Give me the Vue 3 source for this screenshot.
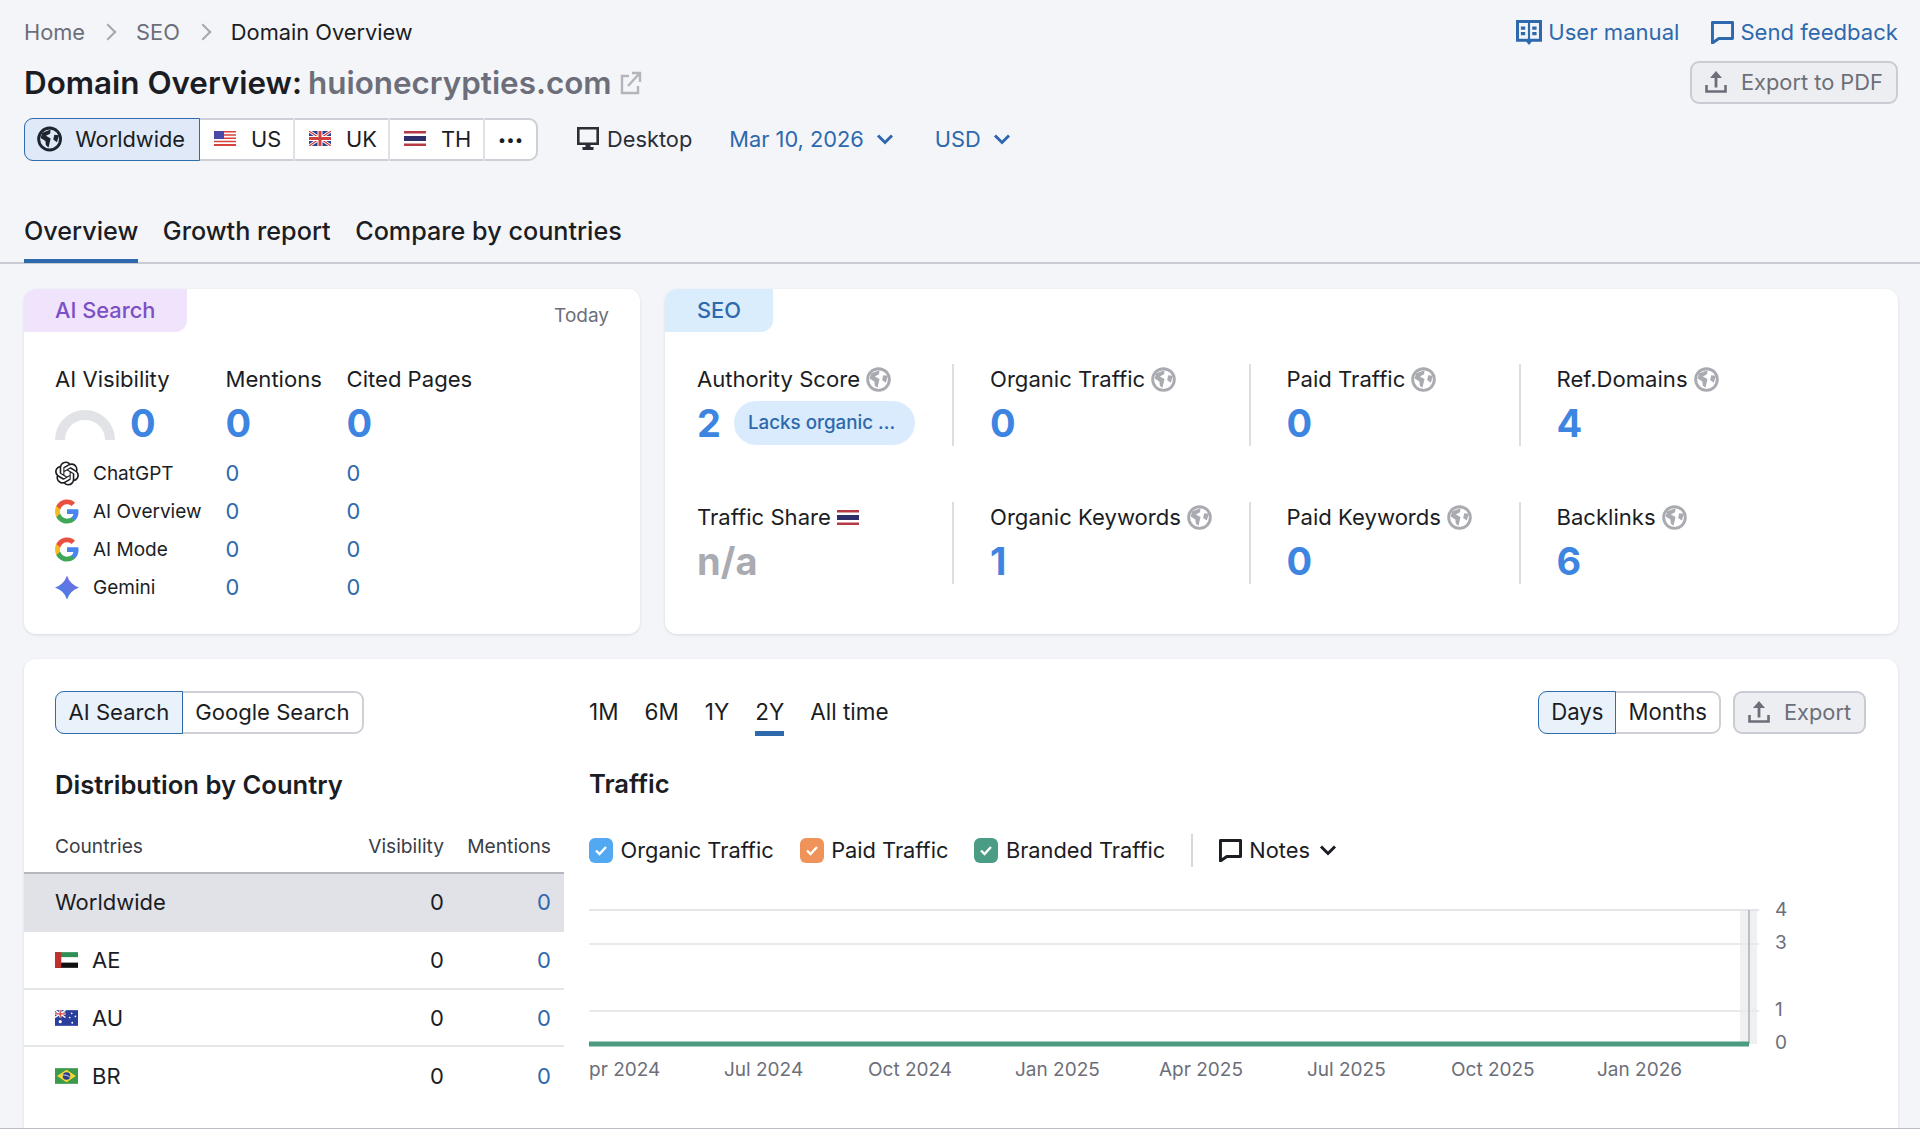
<script setup>
const regions = [
  { code: "US", flag: "flag-us" },
  { code: "UK", flag: "flag-uk" },
  { code: "TH", flag: "flag-th" },
];

const tabs = ["Overview", "Growth report", "Compare by countries"];

const aiRows = [
  { name: "ChatGPT", icon: "chatgpt" },
  { name: "AI Overview", icon: "google" },
  { name: "AI Mode", icon: "google" },
  { name: "Gemini", icon: "gemini" },
];

const seoMetrics = [
  { label: "Authority Score", value: "2", pill: "Lacks organic ..." },
  { label: "Organic Traffic", value: "0" },
  { label: "Paid Traffic", value: "0" },
  { label: "Ref.Domains", value: "4" },
  { label: "Traffic Share", value: "n/a", muted: true, flag: "flag-th" },
  { label: "Organic Keywords", value: "1" },
  { label: "Paid Keywords", value: "0" },
  { label: "Backlinks", value: "6" },
];

const countries = [
  { name: "Worldwide", active: true },
  { name: "AE", flag: "flag-ae" },
  { name: "AU", flag: "flag-au" },
  { name: "BR", flag: "flag-br" },
];

const ranges = ["1M", "6M", "1Y", "2Y", "All time"];

const legend = [
  { label: "Organic Traffic", color: "#52a9f2" },
  { label: "Paid Traffic", color: "#f0935a" },
  { label: "Branded Traffic", color: "#4a9d84" },
];

// chart coordinates are relative to the svg box
const gridLines = [15, 49, 116];
const yTicks = [
  { label: "4", y: 14 },
  { label: "3", y: 47 },
  { label: "1", y: 114 },
  { label: "0", y: 147 },
];
const xTicks = [
  { label: "pr 2024", x: 0 },
  { label: "Jul 2024", x: 135 },
  { label: "Oct 2024", x: 279 },
  { label: "Jan 2025", x: 426 },
  { label: "Apr 2025", x: 570 },
  { label: "Jul 2025", x: 718 },
  { label: "Oct 2025", x: 862 },
  { label: "Jan 2026", x: 1008 },
];
</script>

<template>
  <div class="page">
    <svg class="defs" aria-hidden="true">
      <symbol id="globe" viewBox="0 0 24 24">
        <circle cx="12" cy="12" r="10.400" fill="none" stroke="currentColor" stroke-width="2.800" />
        <path fill="currentColor" d="M5 6l8-3-.5 4-4 2 4.500 2.500L11 20l-2.500-2-.5-4-4.500-3z" />
        <path fill="currentColor" d="M16.500 8l4.500.5-2 6.500-3.500-2.500z" />
      </symbol>
      <symbol id="flag-us" viewBox="0 0 22 15">
        <rect width="22" height="15" fill="#fff" />
        <path fill="#d8423e" d="M0 0h22v1.600H0zM0 3.200h22v1.600H0zM0 6.500h22v1.600H0zM0 9.700h22v1.600H0zM0 13h22v2H0z" />
        <rect width="10" height="8" fill="#4a49a8" />
      </symbol>
      <symbol id="flag-uk" viewBox="0 0 22 15">
        <rect width="22" height="15" fill="#2d3f8f" />
        <path stroke="#fff" stroke-width="3" d="M0 0l22 15M22 0L0 15" />
        <path stroke="#d0403f" stroke-width="1.200" d="M0 0l22 15M22 0L0 15" />
        <path stroke="#fff" stroke-width="5" d="M11 0v15M0 7.500h22" />
        <path stroke="#d0403f" stroke-width="3" d="M11 0v15M0 7.500h22" />
      </symbol>
      <symbol id="flag-th" viewBox="0 0 22 15">
        <rect width="22" height="15" fill="#b53a44" />
        <rect y="2.500" width="22" height="10" fill="#fff" />
        <rect y="5" width="22" height="5" fill="#2d2f6b" />
      </symbol>
      <symbol id="flag-ae" viewBox="0 0 22 15">
        <rect width="22" height="5" fill="#2f8f55" />
        <rect y="5" width="22" height="5" fill="#fff" />
        <rect y="10" width="22" height="5" fill="#111" />
        <rect width="6" height="15" fill="#c0302c" />
      </symbol>
      <symbol id="flag-au" viewBox="0 0 22 15">
        <rect width="22" height="15" fill="#2a3f9d" />
        <path stroke="#fff" stroke-width="1.400" d="M0 0l10 7M10 0L0 7" />
        <path stroke="#fff" stroke-width="2.400" d="M5 0v7M0 3.500h10" />
        <path stroke="#d0403f" stroke-width="1.200" d="M5 0v7M0 3.500h10" />
        <g fill="#fff">
          <circle cx="5" cy="11" r="1.500" />
          <circle cx="16" cy="3" r=".8" />
          <circle cx="19.500" cy="6" r=".8" />
          <circle cx="14" cy="7" r=".8" />
          <circle cx="16.500" cy="12" r=".9" />
        </g>
      </symbol>
      <symbol id="flag-br" viewBox="0 0 22 15">
        <rect width="22" height="15" fill="#3d9a4a" />
        <path fill="#f4d83a" d="M11 1.500L20 7.500 11 13.500 2 7.500z" />
        <circle cx="11" cy="7.500" r="3.600" fill="#2b3a8a" />
        <path stroke="#fff" stroke-width=".8" fill="none" d="M7.600 6.600c2.500-.3 5 .5 6.700 2.200" />
      </symbol>
      <symbol id="upload" viewBox="0 0 24 24">
        <path fill="none" stroke="currentColor" stroke-width="2.600" d="M2.500 15v6.500h19V15" />
        <path fill="currentColor" d="M12 1l6 7h-4.600v9.500h-2.800V8H6z" />
      </symbol>
      <symbol id="bubble" viewBox="1 1 22 22">
        <path fill="none" stroke="currentColor" stroke-width="2.800" stroke-linejoin="round" d="M2.400 2.400h19.200v15.300H8.500l-6.100 4.300z" />
      </symbol>
      <symbol id="chev" viewBox="0 0 18 18">
        <path fill="none" stroke="currentColor" stroke-width="3" d="M2 5.500l7 7 7-7" />
      </symbol>
    </svg>

    <div class="head-top">
      <div class="crumbs">
        <span class="crumb">Home</span>
        <span class="crumb-sep"></span>
        <span class="crumb">SEO</span>
        <span class="crumb-sep"></span>
        <span class="crumb-now">Domain Overview</span>
      </div>
      <div class="links">
        <a class="link">
          <svg class="book" viewBox="1 2 24 23">
            <path fill="currentColor" d="M1 2h24v20h-9.500L13 25l-2.500-3H1zM3.800 4.800v14.500H12V4.800zM14 4.800v14.500h8.200V4.800z" />
            <path fill="currentColor" d="M5.500 8h4v3h-4zM5.500 13h4v3h-4zM16 8h4v3h-4zM16 13h4v3h-4z" />
          </svg>
          User manual
        </a>
        <a class="link">
          <svg class="bubble"><use href="#bubble" /></svg>
          Send feedback
        </a>
      </div>
    </div>

    <div class="title-row">
      <h1 class="title">
        <span>Domain Overview:</span>
        <span class="domain">huionecrypties.com</span>
        <svg class="ext" viewBox="0 0 22 24">
          <path fill="none" stroke="currentColor" stroke-width="2.400" d="M9 5H2v17h16v-7" />
          <path fill="none" stroke="currentColor" stroke-width="2.400" d="M8 15L19 3M12 2h8v9" />
        </svg>
      </h1>
      <button class="btn-export pdf">
        <svg class="up"><use href="#upload" /></svg>
        Export to PDF
      </button>
    </div>

    <div class="toolbar">
      <div class="seg">
        <div class="seg-item active world">
          <svg class="globe-dark"><use href="#globe" /></svg>
          Worldwide
        </div>
        <div v-for="r in regions" :key="r.code" class="seg-item region">
          <svg class="flag"><use :href="'#' + r.flag" /></svg>
          {{ r.code }}
        </div>
        <div class="seg-item dots">•••</div>
      </div>
      <div class="device">
        <svg class="monitor" viewBox="0 0 22 24">
          <path fill="none" stroke="currentColor" stroke-width="2.600" d="M1.300 1.300h19.400v15.400H1.300z" />
          <path fill="currentColor" d="M8.500 17h5v3h3v3h-11v-3h3z" />
        </svg>
        Desktop
      </div>
      <div class="picker date">
        Mar 10, 2026
        <svg class="chev"><use href="#chev" /></svg>
      </div>
      <div class="picker usd">
        USD
        <svg class="chev"><use href="#chev" /></svg>
      </div>
    </div>

    <div class="tabs">
      <div v-for="(t, i) in tabs" :key="t" class="tab" :class="{ on: i === 0 }">{{ t }}</div>
    </div>

    <div class="cards">
      <section class="card ai-card">
        <div class="card-head">
          <div class="tag tag-ai">AI Search</div>
          <div class="today">Today</div>
        </div>
        <div class="ai-grid">
          <div class="lbl">AI Visibility</div>
          <div class="lbl">Mentions</div>
          <div class="lbl">Cited Pages</div>
          <div class="big-cell">
            <svg class="gauge" viewBox="0 0 60 30">
              <path fill="none" stroke="#e2e3e7" stroke-width="10" d="M5 30a25 25 0 0 1 50 0" />
            </svg>
            <span class="big">0</span>
          </div>
          <div class="big-cell"><span class="big">0</span></div>
          <div class="big-cell"><span class="big">0</span></div>

          <template v-for="row in aiRows" :key="row.name">
            <div class="ai-name">
              <svg v-if="row.icon === 'chatgpt'" class="ai-icon" viewBox="0 0 24 24">
                <path fill="#1c1d22" d="M22.2819 9.8211a5.9847 5.9847 0 0 0-.5157-4.9108 6.0462 6.0462 0 0 0-6.5098-2.9A6.0651 6.0651 0 0 0 4.9807 4.1818a5.9847 5.9847 0 0 0-3.9977 2.9 6.0462 6.0462 0 0 0 .7427 7.0966 5.98 5.98 0 0 0 .511 4.9107 6.051 6.051 0 0 0 6.5146 2.9001A5.9847 5.9847 0 0 0 13.2599 24a6.0557 6.0557 0 0 0 5.7718-4.2058 5.9894 5.9894 0 0 0 3.9977-2.9001 6.0557 6.0557 0 0 0-.7475-7.0729zm-9.022 12.6081a4.4755 4.4755 0 0 1-2.8764-1.0408l.1419-.0804 4.7783-2.7582a.7948.7948 0 0 0 .3927-.6813v-6.7369l2.02 1.1686a.071.071 0 0 1 .038.052v5.5826a4.504 4.504 0 0 1-4.4945 4.4944zm-9.6607-4.1254a4.4708 4.4708 0 0 1-.5346-3.0137l.142.0852 4.783 2.7582a.7712.7712 0 0 0 .7806 0l5.8428-3.3685v2.3324a.0804.0804 0 0 1-.0332.0615L9.74 19.9502a4.4992 4.4992 0 0 1-6.1408-1.6464zM2.3408 7.8956a4.485 4.485 0 0 1 2.3655-1.9728V11.6a.7664.7664 0 0 0 .3879.6765l5.8144 3.3543-2.0201 1.1685a.0757.0757 0 0 1-.071 0l-4.8303-2.7865A4.504 4.504 0 0 1 2.3408 7.872zm16.5963 3.8558L13.1038 8.364 15.1192 7.2a.0757.0757 0 0 1 .071 0l4.8303 2.7913a4.4944 4.4944 0 0 1-.6765 8.1042v-5.6772a.79.79 0 0 0-.407-.667zm2.0107-3.0231l-.142-.0852-4.7735-2.7818a.7759.7759 0 0 0-.7854 0L9.409 9.2297V6.8974a.0662.0662 0 0 1 .0284-.0615l4.8303-2.7866a4.4992 4.4992 0 0 1 6.6802 4.66zM8.3065 12.863l-2.02-1.1638a.0804.0804 0 0 1-.038-.0567V6.0742a4.4992 4.4992 0 0 1 7.3757-3.4537l-.142.0805L8.704 5.459a.7948.7948 0 0 0-.3927.6813zm1.0976-2.3654l2.602-1.4998 2.6069 1.4998v2.9994l-2.5974 1.4997-2.6067-1.4997Z" />
              </svg>
              <svg v-else-if="row.icon === 'google'" class="ai-icon" viewBox="1 1 22 22">
                <path fill="#4a84ee" d="M22.560 12.250c0-.78-.07-1.530-.2-2.250H12v4.260h5.920c-.26 1.370-1.040 2.530-2.210 3.310v2.770h3.570c2.080-1.920 3.280-4.740 3.280-8.090z" />
                <path fill="#3fa757" d="M12 23c2.970 0 5.460-.98 7.280-2.660l-3.570-2.770c-.98.66-2.230 1.060-3.710 1.060-2.860 0-5.290-1.930-6.160-4.530H2.180v2.840C3.990 20.530 7.700 23 12 23z" />
                <path fill="#f5bb1c" d="M5.840 14.090c-.22-.66-.35-1.360-.35-2.090s.13-1.430.35-2.090V7.070H2.180C1.430 8.550 1 10.220 1 12s.43 3.450 1.180 4.930l2.850-2.220.81-.62z" />
                <path fill="#e8503f" d="M12 5.380c1.620 0 3.060.56 4.210 1.640l3.150-3.150C17.450 2.090 14.970 1 12 1 7.700 1 3.990 3.470 2.180 7.070l3.660 2.840c.87-2.600 3.300-4.530 6.160-4.530z" />
              </svg>
              <svg v-else class="ai-icon" viewBox="0 0 24 24">
                <defs>
                  <linearGradient id="gem" x1="0" y1="1" x2="1" y2="0">
                    <stop offset="0" stop-color="#3f84e8" />
                    <stop offset="1" stop-color="#7a6be0" />
                  </linearGradient>
                </defs>
                <path fill="url(#gem)" d="M12 0Q15 9 24 12 15 15 12 24 9 15 0 12 9 9 12 0z" />
              </svg>
              <span>{{ row.name }}</span>
            </div>
            <div class="small-val">0</div>
            <div class="small-val">0</div>
          </template>
        </div>
      </section>

      <section class="card seo-card">
        <div class="card-head">
          <div class="tag tag-seo">SEO</div>
        </div>
        <div class="seo-grid">
          <div v-for="m in seoMetrics" :key="m.label" class="metric">
            <div class="lbl lbl-row">
              {{ m.label }}
              <svg v-if="m.flag" class="flag-sm"><use :href="'#' + m.flag" /></svg>
              <svg v-else class="globe"><use href="#globe" /></svg>
            </div>
            <div class="big-cell">
              <span class="big" :class="{ muted: m.muted }">{{ m.value }}</span>
              <span v-if="m.pill" class="pill">{{ m.pill }}</span>
            </div>
          </div>
        </div>
      </section>
    </div>

    <section class="card bottom">
      <div class="left-col">
        <div class="seg seg-left">
          <div class="seg-item active">AI Search</div>
          <div class="seg-item">Google Search</div>
        </div>
        <h2 class="sub">Distribution by Country</h2>
        <div class="t-head t-row">
          <span>Countries</span>
          <span class="num">Visibility</span>
          <span class="num">Mentions</span>
        </div>
        <div v-for="c in countries" :key="c.name" class="t-body t-row" :class="{ current: c.active }">
          <span class="t-name">
            <svg v-if="c.flag" class="flag-row"><use :href="'#' + c.flag" /></svg>
            {{ c.name }}
          </span>
          <span class="num">0</span>
          <span class="num blue">0</span>
        </div>
      </div>

      <div class="right-col">
        <div class="ctrl-row">
          <div class="ranges">
            <div v-for="r in ranges" :key="r" class="range" :class="{ on: r === '2Y' }">{{ r }}</div>
          </div>
          <div class="ctrl-right">
            <div class="seg seg-days">
              <div class="seg-item active">Days</div>
              <div class="seg-item">Months</div>
            </div>
            <button class="btn-export exp">
              <svg class="up"><use href="#upload" /></svg>
              Export
            </button>
          </div>
        </div>

        <h2 class="sub traffic">Traffic</h2>

        <div class="legend">
          <div v-for="l in legend" :key="l.label" class="leg-item">
            <span class="check" :style="{ background: l.color }">
              <svg viewBox="0 0 16 16"><path fill="none" stroke="#fff" stroke-width="2.400" d="M3 8.500l3.500 3.500L13 5" /></svg>
            </span>
            {{ l.label }}
          </div>
          <span class="leg-div"></span>
          <div class="notes">
            <svg class="bubble"><use href="#bubble" /></svg>
            Notes
            <svg class="chev"><use href="#chev" /></svg>
          </div>
        </div>

        <svg class="chart" viewBox="0 0 1277 190">
          <rect x="1151" y="15" width="17" height="134" fill="#eef0f2" />
          <line x1="0" x2="1170" y1="15" y2="15" stroke="#e4e5e8" stroke-width="2" />
          <line v-for="y in gridLines.slice(1)" :key="y" x1="0" x2="1170" :y1="y" :y2="y" stroke="#e9eaec" stroke-width="2" />
          <line x1="1160" x2="1160" y1="15" y2="149" stroke="#bcc0c4" stroke-width="2" />
          <line x1="0" x2="1160" y1="149" y2="149" stroke="#4c9a80" stroke-width="5" />
          <text v-for="t in yTicks" :key="t.label" x="1186" :y="t.y + 7" class="tick">{{ t.label }}</text>
          <text v-for="t in xTicks" :key="t.label" :x="t.x" y="181" class="tick">{{ t.label }}</text>
        </svg>
      </div>
    </section>
  </div>
</template>

<style>
html,
body {
  margin: 0;
  background: #f4f5f9;
}
</style>

<style scoped>
.page {
  width: 1920px;
  height: 1129px;
  box-sizing: border-box;
  padding: 8px 22px 0 24px;
  background: #f4f5f9;
  border-bottom: 1px solid #b9bcc3;
  overflow: hidden;
  font-family: Inter, "Liberation Sans", sans-serif;
  font-size: 21.8px;
  color: #1b1d24;
}

.defs {
  position: absolute;
  width: 0;
  height: 0;
}

.head-top {
  display: flex;
  justify-content: space-between;
  align-items: center;
  height: 48px;
}

.crumbs {
  display: flex;
  align-items: center;
}

.crumb {
  color: #6c6e79;
}

.crumb-sep {
  width: 10px;
  height: 10px;
  margin: 0 22px 0 17px;
  border-top: 2px solid #a4a7af;
  border-right: 2px solid #a4a7af;
  transform: rotate(45deg);
}

.links {
  display: flex;
  gap: 32px;
  font-size: 22.100px;
}

.link {
  display: flex;
  align-items: center;
  gap: 6px;
  color: #2e68ad;
}

.book {
  width: 26px;
  height: 25px;
}

.bubble {
  width: 23px;
  height: 23px;
}

.title-row {
  display: flex;
  justify-content: space-between;
  align-items: center;
  height: 43px;
  margin-top: 5px;
}

.title {
  display: flex;
  align-items: center;
  gap: 6px;
  margin: 0;
  font-size: 31.400px;
  font-weight: 600;
}

.domain {
  color: #6c6e79;
}

.ext {
  width: 22px;
  height: 24px;
  margin-left: 2px;
  color: #b3b5bb;
}

.btn-export {
  display: flex;
  align-items: center;
  box-sizing: border-box;
  height: 43px;
  border: 2px solid #c9ccd3;
  border-radius: 9px;
  background: #eceef1;
  color: #6c6e79;
  font: inherit;
}

.pdf {
  width: 208px;
  gap: 13px;
  padding: 0 0 2px 12px;
}

.exp {
  width: 133px;
  gap: 13px;
  padding: 0 0 2px 12px;
}

.up {
  width: 24px;
  height: 24px;
}

.toolbar {
  display: flex;
  align-items: center;
  margin-top: 14px;
}

.seg {
  display: flex;
  box-sizing: border-box;
  height: 43px;
  background: #fff;
  border: 2px solid #cdd0d6;
  border-radius: 9px;
}

.seg-item {
  display: flex;
  align-items: center;
  box-sizing: border-box;
  margin: -2px 0;
  padding: 0 14px 2px;
  border-right: 2px solid #dfe1e5;
}

.seg-item:last-child {
  border-right: 0;
}

.seg-item.active {
  margin: -2px 0 -2px -2px;
  border: 1.500px solid #2e6cb0;
  border-radius: 9px 0 0 9px;
  background: #e9f2fb;
}

.seg-item.world {
  width: 176px;
  gap: 13px;
  padding-left: 12px;
  background: #dfe9f8;
}

.region {
  width: 95px;
  gap: 15px;
}

.dots {
  width: 51px;
  justify-content: center;
  padding: 0;
  font-size: 15px;
}

.globe-dark {
  width: 26px;
  height: 26px;
  color: #1f2530;
}

.flag {
  width: 22px;
  height: 15px;
  flex: none;
}

.device {
  display: flex;
  align-items: center;
  gap: 8px;
  margin-left: 39px;
  padding-bottom: 2px;
  color: #2b2e36;
}

.monitor {
  width: 22px;
  height: 24px;
}

.picker {
  display: flex;
  align-items: center;
  gap: 12px;
  padding-bottom: 2px;
  color: #2e68ad;
}

.date {
  margin-left: 37px;
}

.usd {
  margin-left: 41px;
}

.chev {
  width: 18px;
  height: 18px;
}

.tabs {
  display: flex;
  gap: 24.500px;
  box-sizing: border-box;
  height: 64px;
  margin: 39px -22px 0 -24px;
  padding: 0 22px 0 24px;
  border-bottom: 2px solid #c8cbd2;
}

.tab {
  box-sizing: border-box;
  height: 63px;
  padding-top: 2px;
  line-height: 58px;
  font-size: 25.200px;
  font-weight: 500;
  border-bottom: 4px solid transparent;
}

.tab.on {
  border-bottom-color: #2e68ad;
}

.cards {
  display: flex;
  gap: 25px;
  margin-top: 25px;
}

.card {
  background: #fff;
  border-radius: 12px;
  box-shadow: 0 1px 3px rgba(30, 35, 50, 0.12);
}

.ai-card {
  width: 616px;
  height: 345px;
}

.seo-card {
  flex: 1;
  height: 345px;
}

.card-head {
  display: flex;
  justify-content: space-between;
  height: 43px;
}

.tag {
  height: 43px;
  padding: 0 32px;
  line-height: 43px;
  font-weight: 500;
  border-radius: 12px 0 12px 0;
}

.tag-ai {
  padding: 0 32px 0 31px;
  background: #efe4fb;
  color: #7c4fc4;
}

.tag-seo {
  background: #d9edfc;
  color: #2e68ad;
}

.today {
  margin: 14px 31px 0 0;
  line-height: 26px;
  font-size: 19px;
  color: #6c6e79;
}

.ai-grid {
  display: grid;
  grid-template-columns: 170.500px 121px 1fr;
  grid-template-rows: 30px 60px repeat(4, 38px);
  padding: 32px 0 0 31px;
}

.lbl {
  line-height: 30px;
  font-size: 22.100px;
}

.lbl-row {
  display: flex;
  align-items: center;
  gap: 6px;
}

.big-cell {
  display: flex;
  align-items: center;
  margin-top: 7px;
  height: 44px;
}

.big {
  font-size: 38px;
  font-weight: 700;
  color: #3d85e0;
  line-height: 44px;
}

.big.muted {
  color: #a9abb1;
}

.gauge {
  width: 60px;
  height: 30px;
  margin: 3px 15px 0 0;
}

.ai-name {
  display: flex;
  align-items: center;
  gap: 14px;
  font-size: 19px;
}

.ai-icon {
  width: 24px;
  height: 25px;
}

.small-val {
  line-height: 38px;
  color: #2e68ad;
}

.seo-grid {
  display: grid;
  grid-template-columns: 255px 296.500px 270px 1fr;
  grid-auto-rows: 82px;
  row-gap: 56px;
  padding: 32px 0 0 32px;
}

.metric:not(:nth-child(4n + 1)) {
  padding-left: 36px;
  border-left: 2px solid #dcdee2;
}

.globe {
  width: 25px;
  height: 25px;
  color: #a9abb1;
}

.flag-sm {
  width: 22px;
  height: 15px;
}

.pill {
  margin-left: 13px;
  padding: 0 20px 0 14px;
  line-height: 44px;
  border-radius: 22px;
  background: #d9ebfc;
  color: #2e68ad;
  font-size: 18.800px;
  font-weight: 500;
}

.bottom {
  display: flex;
  height: 469px;
  margin-top: 25px;
  padding: 32px 32px 0 0;
  box-sizing: border-box;
  overflow: hidden;
  border-radius: 12px 12px 0 0;
}

.left-col {
  width: 540px;
  flex: none;
}

.seg-left {
  width: fit-content;
  margin-left: 31px;
  font-size: 22.100px;
}

.seg-left .seg-item {
  padding: 0 12.500px 2px;
}

.sub {
  margin: 34px 0 0 31px;
  line-height: 34px;
  font-size: 25.600px;
  font-weight: 600;
}

.t-row {
  display: grid;
  grid-template-columns: 1fr 100px 107px;
  align-items: center;
  padding: 0 13px 0 31px;
  box-sizing: border-box;
}

.t-head {
  height: 54px;
  margin-top: 18px;
  font-size: 19.200px;
  color: #3a3d46;
  border-bottom: 2px solid #b4b7bd;
}

.t-body {
  height: 57.700px;
  font-size: 22px;
  border-bottom: 2px solid #e4e6ea;
}

.t-body:last-child {
  border-bottom: 0;
}

.t-body.current {
  height: 58px;
  padding-bottom: 2px;
  background: #e0e2e7;
  border-bottom: 0;
}

.t-name {
  display: flex;
  align-items: center;
  gap: 14px;
}

.flag-row {
  width: 23px;
  height: 16px;
}

.num {
  text-align: right;
}

.blue {
  color: #2e68ad;
}

.right-col {
  flex: 1;
  margin-left: 25px;
}

.ctrl-row {
  display: flex;
  justify-content: space-between;
  height: 45px;
}

.ranges {
  display: flex;
  gap: 26px;
}

.range {
  box-sizing: border-box;
  height: 45px;
  line-height: 41px;
  font-size: 22.500px;
  border-bottom: 5px solid transparent;
}

.range.on {
  border-bottom-color: #2e68ad;
}

.ctrl-right {
  display: flex;
  gap: 12px;
}

.seg-days {
  font-size: 22.200px;
}

.seg-days .seg-item {
  padding: 0 12px 2px;
}

.traffic {
  margin: 31px 0 0;
}

.legend {
  display: flex;
  align-items: center;
  height: 34px;
  margin-top: 32px;
  gap: 26px;
}

.leg-item {
  display: flex;
  align-items: center;
  gap: 7.500px;
}

.check {
  display: flex;
  align-items: center;
  justify-content: center;
  width: 24px;
  height: 25px;
  border-radius: 6px;
}

.check svg {
  width: 16px;
  height: 16px;
}

.leg-div {
  width: 2px;
  height: 33px;
  background: #d6d8dd;
}

.notes {
  display: flex;
  align-items: center;
  gap: 7px;
}

.notes .chev {
  margin-left: 2px;
}

.chart {
  display: block;
  width: 1277px;
  height: 190px;
  margin-top: 28px;
}

.tick {
  font-family: Inter, "Liberation Sans", sans-serif;
  font-size: 19px;
  fill: #6c6e79;
}
</style>
